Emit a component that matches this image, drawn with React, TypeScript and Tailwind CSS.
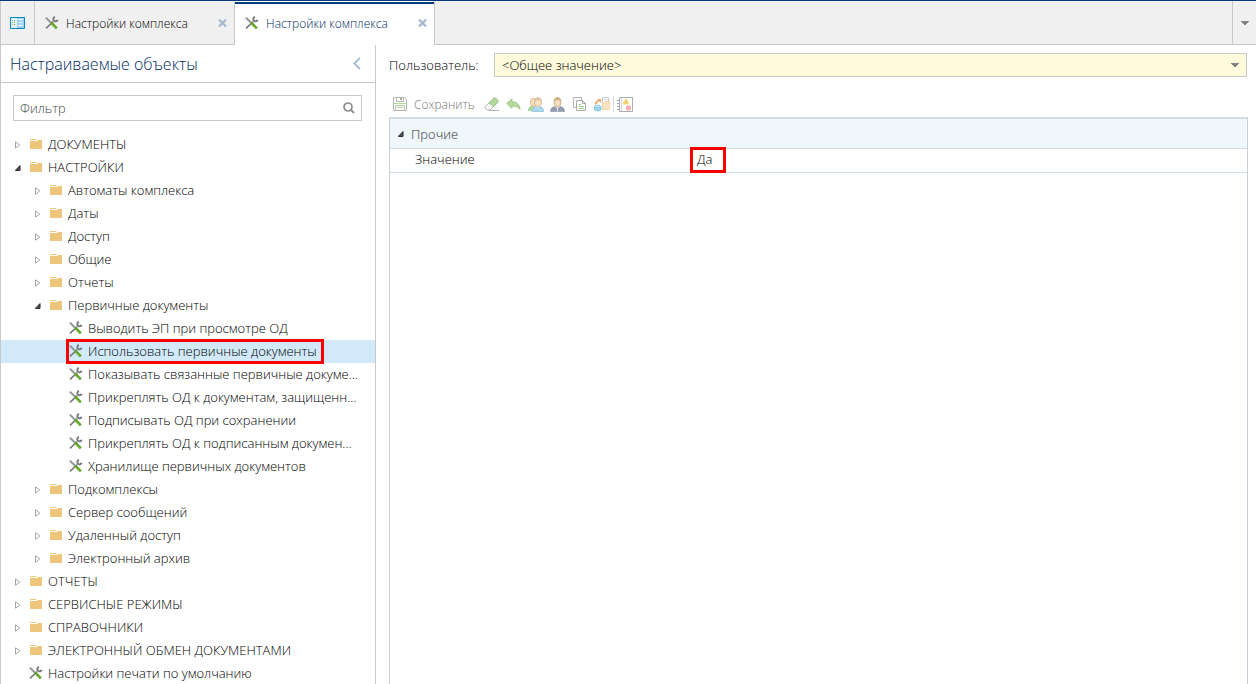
import { useState } from "react";
import type { ReactNode } from "react";

type NodeData = {
  title: string;
  isOpen?: boolean;
  isLeaf?: boolean;
  isSelected?: boolean;
  children?: NodeData[];
};

const tree: NodeData[] = [
  { title: "ДОКУМЕНТЫ" },
  {
    title: "НАСТРОЙКИ",
    isOpen: true,
    children: [
      { title: "Автоматы комплекса" },
      { title: "Даты" },
      { title: "Доступ" },
      { title: "Общие" },
      { title: "Отчеты" },
      {
        title: "Первичные документы",
        isOpen: true,
        children: [
          { title: "Выводить ЭП при просмотре ОД", isLeaf: true },
          { title: "Использовать первичные документы", isLeaf: true, isSelected: true },
          { title: "Показывать связанные первичные докуме...", isLeaf: true },
          { title: "Прикреплять ОД к документам, защищенн...", isLeaf: true },
          { title: "Подписывать ОД при сохранении", isLeaf: true },
          { title: "Прикреплять ОД к подписанным докумен...", isLeaf: true },
          { title: "Хранилище первичных документов", isLeaf: true },
        ],
      },
      { title: "Подкомплексы" },
      { title: "Сервер сообщений" },
      { title: "Удаленный доступ" },
      { title: "Электронный архив" },
    ],
  },
  { title: "ОТЧЕТЫ" },
  { title: "СЕРВИСНЫЕ РЕЖИМЫ" },
  { title: "СПРАВОЧНИКИ" },
  { title: "ЭЛЕКТРОННЫЙ ОБМЕН ДОКУМЕНТАМИ" },
  { title: "Настройки печати по умолчанию", isLeaf: true },
];

// Left padding of a row for each depth of the tree
const indents = ["pl-3", "pl-8", "pl-[52px]"];

/* Icons */
const ToolsIcon = () => (
  <svg width="14" height="14" viewBox="0 0 14 14" fill="none" className="shrink-0">
    <path d="M1 12.4 8.2 5.6" stroke="#74777b" strokeWidth="1.5" />
    <path d="M10 1A2.2 2.2 0 1 0 12.6 3.8" stroke="#74777b" strokeWidth="1.9" />
    <path d="M0.8 1.6 6.4 7" stroke="#919497" strokeWidth="2" />
    <path d="M6.2 6.8 11.8 12.4" stroke="#5ea321" strokeWidth="2.7" />
    <path d="M6.6 8.2 10.6 12.2" stroke="#a4d070" strokeWidth="0.6" />
  </svg>
);

const FolderIcon = () => (
  <svg width="12" height="10" viewBox="0 0 12 10" fill="#edc67c" className="shrink-0">
    <path d="M0 0h6l1 1H0z" />
    <path d="M0 2h7l1-1h4v9H0z" />
  </svg>
);

const Expander = ({ isOpen }: { isOpen?: boolean }) =>
  isOpen ? (
    <svg width="6" height="6" viewBox="0 0 6 6">
      <path d="M0.4 5.4H5V0.6z" fill="#555" stroke="#222" />
    </svg>
  ) : (
    <svg width="6" height="8" viewBox="0 0 6 8" fill="none" stroke="#a6a6a6">
      <path d="M0.5 0.8v6.4L4.8 4z" />
    </svg>
  );

const CloseIcon = () => (
  <svg width="9" height="8" viewBox="0 0 9 8" stroke="#a5b9d1" strokeWidth="2.2">
    <path d="M1 0.5 8 7.5M8 0.5 1 7.5" />
  </svg>
);

const CaretIcon = ({ className = "" }: { className?: string }) => (
  <svg width="8" height="4" viewBox="0 0 8 4" fill="#7f8387" className={className}>
    <path d="M0 0h8v1H7v1H6v1H5v1H3V3H2V2H1V1H0z" />
  </svg>
);

const HomeIcon = () => (
  <svg width="15" height="12" viewBox="0 0 15 12">
    <path d="M0.5 0.5h14v11H0.5z" fill="#e3f3fb" stroke="#0a84c6" />
    <path d="M7 1h7v10H7z" fill="#9fd2ee" />
    <path d="M8.5 2.5h4M8.5 5.5h4M8.5 8.5h4" stroke="#fff" />
    <path d="M2 3h1v1H2zM2 7h1v1H2z" fill="#e0a95a" />
    <path d="M4 3h1v1H4zM4 7h1v1H4z" fill="#4a9fce" />
    <path d="M2 5h1v1H2zM4 5h1v1H4z" fill="#7ab37a" />
  </svg>
);

const SaveIcon = () => (
  <svg width="14" height="14" viewBox="0 0 14 14" fill="none">
    <path d="M0.5 0.5h11l2 2v11H0.5z" fill="#fff" stroke="#b3b6b5" />
    <path d="M3.5 1v3.5h7V1" stroke="#b3b6b5" />
    <path d="M7 1h2v2H7z" fill="#a6aaa8" />
    <path d="M1 6.5h12" stroke="#b2d59a" />
    <path d="M2.5 13V8.5h9V13" stroke="#a7cf8c" />
    <path d="M4 10.5h6" stroke="#c0c3c1" />
  </svg>
);

const EraserIcon = () => (
  <svg width="16" height="15" viewBox="0 0 16 15" fill="none">
    <path d="M1.2 9.6 9.4 1.4q1.2-1 2.4 0l2 1.8q1 1.2 0 2.2L6 13H3.4L1.2 11.2q-0.8-0.8 0-1.6z" fill="#fff" stroke="#a6aaa8" />
    <path d="M5.2 6.2 9.8 1.6q0.9-0.6 1.7 0l2 1.8q0.7 0.8 0 1.6L9.2 9.6z" fill="#b3d99b" stroke="#97c87c" strokeWidth="0.8" />
    <path d="M5 13.5h10" stroke="#b3b6b5" />
  </svg>
);

const UndoIcon = () => (
  <svg width="15" height="13" viewBox="0 0 15 13">
    <path d="M0.6 5.5 6 0.8v2.8q7.2 0 8.2 7.8Q11 7.8 6 8v2.4z" fill="#b3d99b" stroke="#9cc785" strokeWidth="0.8" />
  </svg>
);

const UsersIcon = () => (
  <svg width="16" height="15" viewBox="0 0 16 15">
    <path d="M0.3 13.4q0-3.8 4.7-4.6l3 4.6z" fill="#b0d89b" stroke="#8fc47a" strokeWidth="0.6" />
    <ellipse cx="5.6" cy="5.2" rx="3.3" ry="4" fill="#f7dfbf" stroke="#d7b78c" strokeWidth="0.9" />
    <path d="M4 14.4q0-3.8 3.6-4.6l2.2 1.8 2.2-1.8q3.6 0.8 3.6 4.6z" fill="#aedcf2" stroke="#85bddc" strokeWidth="0.8" />
    <ellipse cx="10" cy="5.2" rx="3.4" ry="4.3" fill="#f9e3c8" stroke="#d1af84" strokeWidth="0.9" />
    <path d="M6.6 5Q6.4 0.8 10 0.8T13.4 5L12 3.2H8z" fill="#ddc19b" />
  </svg>
);

const UserIcon = () => (
  <svg width="15" height="15" viewBox="0 0 15 15">
    <path d="M0.4 14.6q0-4 4-5l3.1 2.2 3.1-2.2q4 1 4 5z" fill="#929fae" stroke="#7d8b9d" strokeWidth="0.6" />
    <path d="M5.4 9 7.5 11.6 9.6 9z" fill="#f5e4d0" />
    <path d="M7 11h1v3.6H7z" fill="#e2e7ed" />
    <ellipse cx="7.5" cy="5.1" rx="3.4" ry="4.4" fill="#f4dcbc" stroke="#c9a77a" strokeWidth="0.9" />
    <path d="M4 5Q3.8 0.6 7.5 0.6T11 5L9.6 3.2H5.6z" fill="#d0ad7f" />
  </svg>
);

const CopyIcon = () => (
  <svg width="14" height="14" viewBox="0 0 14 14" fill="none">
    <path d="M0.5 0.5h8v10h-8z" fill="#fff" stroke="#b0b3b2" />
    <path d="M3.5 3.5h6l3 3v7h-9z" fill="#fff" stroke="#a6aaa8" />
    <path d="M9.5 3.5v3h3" stroke="#a6aaa8" />
    <path d="M6 7.5h2M6 9.5h5M6 11.5h5" stroke="#9ccc7f" />
  </svg>
);

const TransferIcon = () => (
  <svg width="16" height="15" viewBox="0 0 16 15" fill="none">
    <path d="M8.5 0.5h6v6h-6z" fill="#fff" stroke="#c8cac9" />
    <path d="M10 2.5h3" stroke="#d0d2d1" />
    <path d="M8.5 6.5h2l1-2h4v8h-7z" fill="#fde4c0" stroke="#f6d5a6" />
    <path d="M1.5 7.5q0-2.5 3.5-4" stroke="#f4a873" strokeWidth="1.8" />
    <path d="M3 2h4v4z" fill="#f4a873" />
    <path d="M0.5 9.5V13q3.5 2 6.5 0V9.5" fill="#a8d9f1" stroke="#87c6e6" />
    <ellipse cx="3.7" cy="9.5" rx="3.2" ry="1.2" fill="#d5eefa" stroke="#87c6e6" />
  </svg>
);

const LogIcon = () => (
  <svg width="16" height="15" viewBox="0 0 16 15" fill="none">
    <path d="M2.5 0.5h13v14h-13z" fill="#fff" stroke="#a9abb0" />
    <path d="M4.5 1v13" stroke="#d9dadd" />
    <path d="M0 3.5h3M0 6.5h3M0 9.5h3M0 12.5h3" stroke="#a9abb0" />
    <path d="M9 1.8 12 7H6z" fill="#ffe070" stroke="#ffdc78" />
    <path d="M9 3.4v2M9 5.8v0.8" stroke="#b0925a" strokeWidth="0.8" />
    <circle cx="11.5" cy="11" r="2.2" fill="#fbd5d5" stroke="#f0a0a0" />
    <path d="m10.6 10.1 1.8 1.8M12.4 10.1l-1.8 1.8" stroke="#e98080" strokeWidth="0.8" />
  </svg>
);

const toolbar: { label: string; icon: ReactNode }[] = [
  { label: "Очистить", icon: <EraserIcon /> },
  { label: "Отменить", icon: <UndoIcon /> },
  { label: "Пользователи", icon: <UsersIcon /> },
  { label: "Пользователь", icon: <UserIcon /> },
  { label: "Копировать", icon: <CopyIcon /> },
  { label: "Перенести", icon: <TransferIcon /> },
];

type TabProps = {
  title: string;
  isActive?: boolean;
};

const Tab = ({ title, isActive }: TabProps) => (
  <div
    className={
      isActive
        ? "flex w-[200px] items-center border-r border-b border-r-[#c8c8c8] border-b-white bg-white pt-px text-[#002c64]"
        : "flex w-[200px] items-center border-r border-b border-[#c8c8c8] pt-px text-black"
    }>
    <div
      className={
        isActive
          ? "flex h-full w-full items-center border-t-2 border-[#063b7a] pr-[7px] pb-[3px] pl-[10px]"
          : "flex h-full w-full items-center pr-[7px] pb-px pl-[10px]"
      }>
      <button type="button" className="flex flex-1 items-center gap-[7px] text-left text-xs">
        <ToolsIcon />
        <span className="pt-[2px]">{title}</span>
      </button>
      <button type="button" aria-label="Закрыть">
        <CloseIcon />
      </button>
    </div>
  </div>
);

const TreeNode = ({ node, depth }: { node: NodeData; depth: number }) => {
  const [isOpen, setIsOpen] = useState(!!node.isOpen);

  return (
    <li>
      <div className={`flex h-[23px] items-center ${indents[depth]} ${node.isSelected ? "bg-[#d1e9f9]" : ""}`}>
        {node.isLeaf ? (
          <span className="w-[14px]" />
        ) : (
          <button
            type="button"
            aria-label={node.title}
            aria-expanded={isOpen}
            onClick={() => setIsOpen(!isOpen)}
            className="flex w-[14px] items-center pl-[2px]">
            <Expander isOpen={isOpen} />
          </button>
        )}
        <button
          type="button"
          className={`flex h-[23px] items-center gap-[5px] px-[2px] pb-px whitespace-nowrap ${
            node.isSelected ? "pr-[6px] outline-3 -outline-offset-2 outline-[#fa0000]" : ""
          }`}>
          {node.isLeaf ? <ToolsIcon /> : <span className="flex w-[14px] pl-px"><FolderIcon /></span>}
          {node.title}
        </button>
      </div>
      {node.children && isOpen && (
        <ul>
          {node.children.map((child) => (
            <TreeNode key={child.title} node={child} depth={depth + 1} />
          ))}
        </ul>
      )}
    </li>
  );
};

const Sidebar = () => (
  <aside className="flex w-[375px] shrink-0 flex-col border-r border-[#c8c8c8]">
    <div className="flex h-[38px] items-center justify-between border-b border-[#c8c8c8] pr-[14px] pl-[9px]">
      <h1 className="text-base text-[#002c64]">Настраиваемые объекты</h1>
      <button type="button" aria-label="Свернуть">
        <svg width="8" height="13" viewBox="0 0 8 13" fill="none" stroke="#a5b9d1" strokeWidth="1.8">
          <path d="M7 0.8 1.4 6.5 7 12.2" />
        </svg>
      </button>
    </div>
    <div className="mt-3 mr-[13px] mb-3 ml-3 flex h-[26px] items-center border border-[#c8c8c8] pr-[6px] pl-[6px]">
      <input
        type="text"
        aria-label="Фильтр"
        placeholder="Фильтр"
        className="min-w-0 flex-1 bg-transparent outline-none placeholder:text-[#444]"
      />
      <button type="button" aria-label="Найти">
        <svg width="12" height="12" viewBox="0 0 12 12" fill="none" stroke="#8c8c8c">
          <circle cx="5" cy="5" r="4" strokeWidth="1.7" />
          <path d="m7.4 7.4 3.6 3.6" strokeWidth="2" />
        </svg>
      </button>
    </div>
    <ul className="min-h-0 flex-1 overflow-hidden text-black">
      {tree.map((node) => (
        <TreeNode key={node.title} node={node} depth={0} />
      ))}
    </ul>
  </aside>
);

const App = () => {
  return (
    <div className="flex h-screen flex-col border-t border-t-[#063b7a] bg-white font-['Open_Sans','Noto_Sans',sans-serif] text-[13px] leading-5 font-light">
      {/* Tabs */}
      <header className="flex h-[44px] shrink-0 border-l border-[#c8c8c8] bg-[#f0f0f0]">
        <button
          type="button"
          aria-label="Главная"
          className="flex w-[34px] items-center justify-center border-r border-b border-[#c8c8c8]">
          <HomeIcon />
        </button>
        <Tab title="Настройки комплекса" />
        <Tab title="Настройки комплекса" isActive />
        <div className="flex-1 border-b border-[#c8c8c8]" />
        <button
          type="button"
          aria-label="Список вкладок"
          className="flex w-6 items-center justify-center border-b border-l border-[#c8c8c8]">
          <CaretIcon />
        </button>
      </header>

      <div className="flex min-h-0 flex-1 border-l border-[#c8c8c8]">
        <Sidebar />
        <main className="flex min-w-0 flex-1 flex-col pr-2 pl-[13px]">
          {/* User */}
          <div className="mt-2 flex items-center">
            <label htmlFor="user" className="w-[105px] shrink-0 text-black">
              Пользователь:
            </label>
            <div className="relative mr-px flex-1">
              <select
                id="user"
                className="block h-6 w-full appearance-none border border-[#c8c8c8] bg-[#fefadb] px-[7px] text-black outline-none">
                <option>&lt;Общее значение&gt;</option>
              </select>
              <CaretIcon className="pointer-events-none absolute top-[10px] right-2" />
            </div>
          </div>
          {/* Toolbar */}
          <div className="mt-4 mb-[2px] flex h-[22px] items-center pl-1 text-xs text-[#777]">
            <button type="button" className="mr-[6px] flex items-center gap-[7px]">
              <SaveIcon />
              <span className="pt-[2px]">Сохранить</span>
            </button>
            {toolbar.map(({ label, icon }) => (
              <button key={label} type="button" aria-label={label} className="flex w-[22px] items-center justify-center">
                {icon}
              </button>
            ))}
            <span className="h-4 w-px bg-[#d8d8d8]" />
            <button type="button" aria-label="Журнал" className="ml-[3px]">
              <LogIcon />
            </button>
          </div>
          {/* Properties */}
          <div className="flex-1 border-x border-t-2 border-x-[#c8cfd6] border-t-[#d0dde6]">
            <table className="w-full table-fixed text-left">
              <thead>
                <tr className="h-[29px] border-b border-[#d0dde6] bg-[#eff7fb]">
                  <th className="w-[300px] pt-px font-light text-[#333]">
                    <button type="button" aria-expanded="true" className="flex items-center gap-[7px] pl-2">
                      <Expander isOpen />
                      Прочие
                    </button>
                  </th>
                  <th />
                </tr>
              </thead>
              <tbody>
                <tr className="h-6 border-b border-[#d0dde6] text-black">
                  <th className="pb-[2px] pl-[25px] font-light">Значение</th>
                  <td>
                    <span className="-mt-px ml-px flex h-6 w-[34px] items-center pb-px pl-[6px] outline-3 -outline-offset-2 outline-[#fa0000]">
                      Да
                    </span>
                  </td>
                </tr>
              </tbody>
            </table>
          </div>
        </main>
      </div>
    </div>
  );
};

export default App;
